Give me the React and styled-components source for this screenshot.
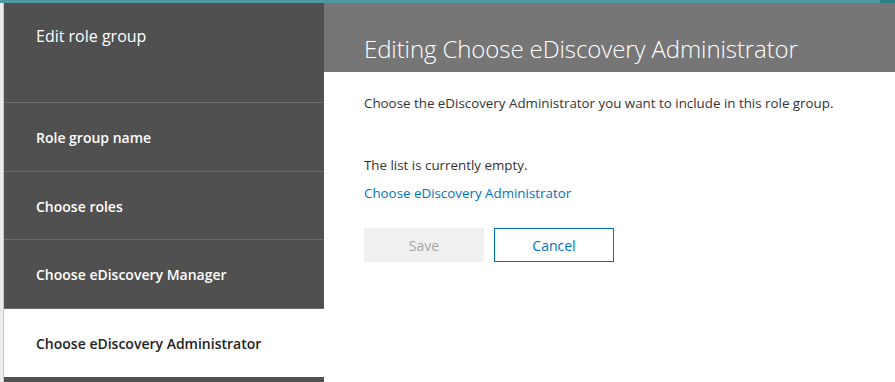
import styled, { createGlobalStyle } from "styled-components";

const GlobalStyle = createGlobalStyle`
    html, body {
        margin: 0;
        padding: 0;
        background: #ffffff;
        overflow: hidden;
    }
    body {
        font-family: "Open Sans", "Noto Sans", sans-serif;
    }
`;

const navItems = [
    "Role group name",
    "Choose roles",
    "Choose eDiscovery Manager",
    "Choose eDiscovery Administrator",
];

const App = () => {
    const activeItem = "Choose eDiscovery Administrator";

    return (
        <>
            <GlobalStyle />
            <S.Page>
                <S.TopLine />
                <S.Main>
                    <S.Gutter />
                    <S.Nav>
                        <S.NavHeader>Edit role group</S.NavHeader>
                        {navItems.map((item) => (
                            <S.NavItem key={item} active={item === activeItem}>
                                {item}
                            </S.NavItem>
                        ))}
                    </S.Nav>
                    <S.Panel>
                        <S.PanelHeader>
                            <S.Title>Editing Choose eDiscovery Administrator</S.Title>
                        </S.PanelHeader>
                        <S.PanelBody>
                            <S.Text>
                                Choose the eDiscovery Administrator you want to include in this role group.
                            </S.Text>
                            <S.EmptyText>The list is currently empty.</S.EmptyText>
                            <S.Link href="#">Choose eDiscovery Administrator</S.Link>
                            <S.Buttons>
                                <S.Button disabled>Save</S.Button>
                                <S.Button primary>Cancel</S.Button>
                            </S.Buttons>
                        </S.PanelBody>
                    </S.Panel>
                </S.Main>
            </S.Page>
        </>
    );
};

const S = {
    Page: styled.div`
        display: flex;
        flex-direction: column;
        width: 895px;
        height: 382px;
    `,
    TopLine: styled.div`
        height: 3px;
        background: linear-gradient(to right, #4f9aa1 0, #4f9aa1 880px, #2f7f86 880px);
        flex-shrink: 0;
    `,
    Main: styled.div`
        display: flex;
        flex: 1;
        min-height: 0;
    `,
    Gutter: styled.div`
        width: 3px;
        background: #ececec;
        border-right: 1px solid #c8c8c8;
    `,
    Nav: styled.div`
        width: 320px;
        background: #505050;
        display: flex;
        flex-direction: column;
    `,
    NavHeader: styled.div`
        height: 100px;
        flex-shrink: 0;
        box-sizing: border-box;
        padding: 22px 0 0 32px;
        color: #ffffff;
        font-size: 16px;
        border-bottom: 1px solid #6c6c6c;
    `,
    NavItem: styled.div`
        height: 68.5px;
        flex-shrink: 0;
        box-sizing: border-box;
        display: flex;
        align-items: center;
        padding-left: 32px;
        padding-top: 2px;
        font-size: 14px;
        font-weight: 600;
        color: ${(p) => (p.active ? "#222222" : "#ffffff")};
        background: ${(p) => (p.active ? "#ffffff" : "#505050")};
        border-bottom: 1px solid ${(p) => (p.active ? "#ffffff" : "#6c6c6c")};
    `,
    Panel: styled.div`
        flex: 1;
        display: flex;
        flex-direction: column;
    `,
    PanelHeader: styled.div`
        height: 69px;
        flex-shrink: 0;
        background: #767676;
        display: flex;
        align-items: flex-end;
        padding-left: 40px;
        box-sizing: border-box;
        padding-bottom: 7px;
    `,
    Title: styled.h1`
        margin: 0;
        color: #ffffff;
        font-size: 24px;
        font-weight: 300;
        letter-spacing: -0.1px;
    `,
    PanelBody: styled.div`
        padding: 22px 0 0 40px;
        display: flex;
        flex-direction: column;
        align-items: flex-start;
    `,
    Text: styled.p`
        margin: 0;
        font-size: 13.35px;
        color: #333333;
    `,
    EmptyText: styled.p`
        margin: 44px 0 0 0;
        font-size: 13.35px;
        color: #333333;
    `,
    Link: styled.a`
        margin-top: 10px;
        font-size: 13.35px;
        color: #0072c6;
        text-decoration: none;
    `,
    Buttons: styled.div`
        display: flex;
        gap: 10px;
        margin-top: 26px;
    `,
    Button: styled.button`
        width: 120px;
        height: 34px;
        font-family: inherit;
        font-size: 14px;
        background: ${(p) => (p.disabled ? "#f0f0f0" : "#ffffff")};
        color: ${(p) => (p.disabled ? "#a6a6a6" : "#0072c6")};
        border: 1px solid ${(p) => (p.primary ? "#0072c6" : "#f0f0f0")};
        padding: 0;
        cursor: pointer;
    `,
};

export default App;
